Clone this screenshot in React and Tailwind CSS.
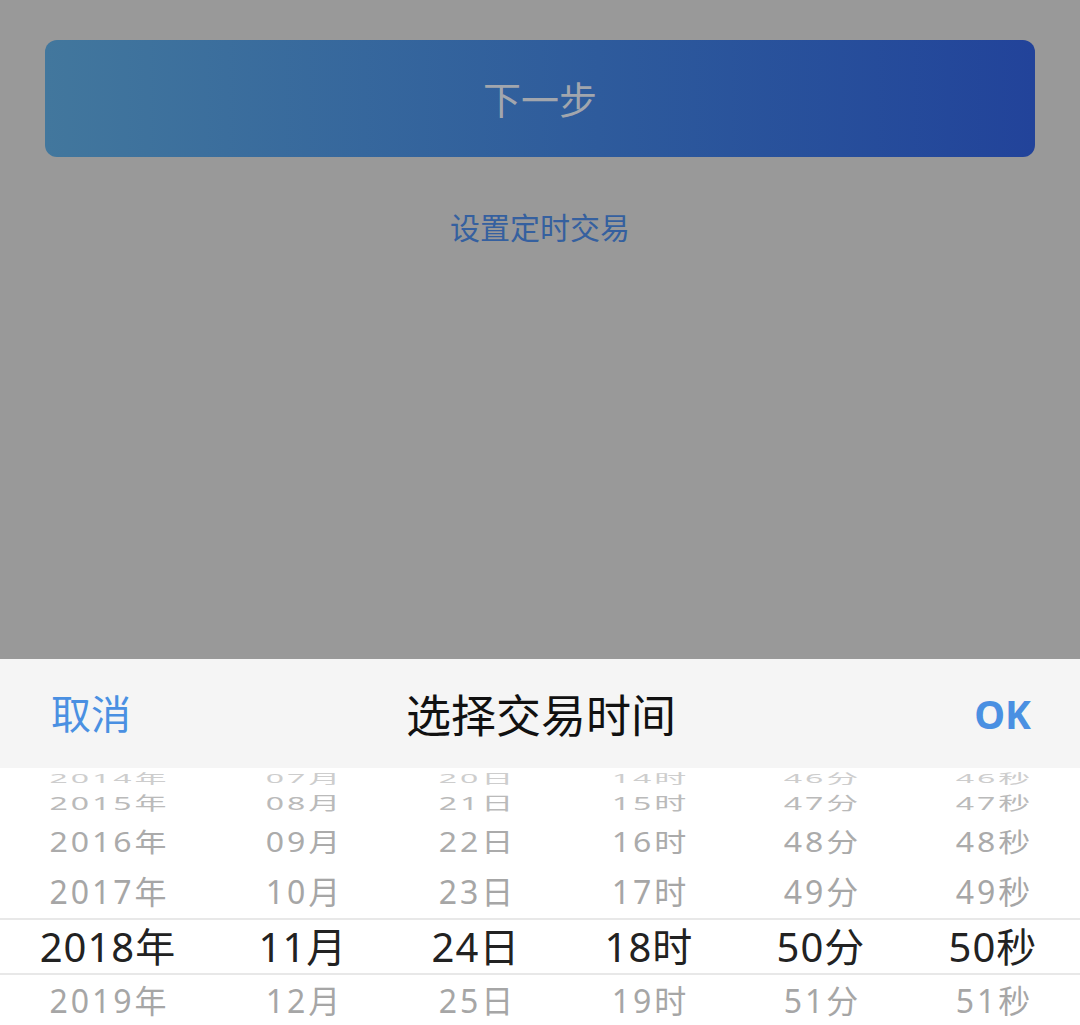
const COL_WIDTHS = ["w-[216px]", "w-[174px]", "w-[172px]", "w-[174px]", "w-[170px]", "w-[174px]"];

const ROWS = [
  { vals: ["2014年", "07月", "20日", "14时", "46分", "46秒"], h: "h-[20px]", color: "text-[#cdcdcd]", scale: "scale-y-[0.4]" },
  { vals: ["2015年", "08月", "21日", "15时", "47分", "47秒"], h: "h-[30px]", color: "text-[#bababa]", scale: "scale-y-[0.57]" },
  { vals: ["2016年", "09月", "22日", "16时", "48分", "48秒"], h: "h-[48px]", color: "text-[#ababab]", scale: "scale-y-[0.83]" },
  { vals: ["2017年", "10月", "23日", "17时", "49分", "49秒"], h: "h-[52px]", color: "text-[#a6a6a6]", scale: "" },
];

const SELECTED = ["2018年", "11月", "24日", "18时", "50分", "50秒"];
const AFTER = ["2019年", "12月", "25日", "19时", "51分", "51秒"];

const font = { fontFamily: '"Noto Sans", "Noto Sans CJK SC", sans-serif' };

function GrayRow({ vals, h, color, scale }) {
  return (
    <div className={`flex shrink-0 ${h} items-center overflow-hidden`}>
      {vals.map((v, i) => (
        <div key={i} className={`${COL_WIDTHS[i]} flex justify-center`}>
          <span className={`text-[32px] leading-none tracking-[3px] pl-[3px] ${color} ${scale} inline-block`}>{v}</span>
        </div>
      ))}
    </div>
  );
}

export default function App() {
  return (
    <div className="w-[1080px] h-[1025px] overflow-hidden flex flex-col bg-white" style={font}>
      <div className="h-[659px] shrink-0 bg-[#999999] flex flex-col items-center pt-[40px] px-[45px]">
        <div className="w-full h-[117px] rounded-[12px] bg-gradient-to-r from-[#42779d] to-[#22439a] flex items-center justify-center">
          <span className="text-[38px] leading-none text-[#a2a6ad]">下一步</span>
        </div>
        <div className="mt-[56px] text-[30px] leading-none text-[#35609f]">设置定时交易</div>
      </div>

      <div className="h-[109px] shrink-0 bg-[#f5f5f5] grid grid-cols-[1fr_auto_1fr] items-center pl-[51px] pr-[49px]">
        <span className="text-[40px] leading-none text-[#4a90e2] justify-self-start">取消</span>
        <span className="text-[45px] leading-none text-[#111111] pt-[4px]">选择交易时间</span>
        <span className="text-[39px] leading-none font-bold text-[#4a90e2] justify-self-end">OK</span>
      </div>

      <div className="flex flex-col shrink-0">
        {ROWS.map((r, i) => (
          <GrayRow key={i} {...r} />
        ))}
        <div className="flex shrink-0 h-[57px] items-center border-y-2 border-[#e8e8e8]">
          {SELECTED.map((v, i) => (
            <div key={i} className={`${COL_WIDTHS[i]} flex justify-center`}>
              <span className="text-[40px] leading-none tracking-[1px] text-[#222222]">{v}</span>
            </div>
          ))}
        </div>
        <GrayRow vals={AFTER} h="h-[52px]" color="text-[#a6a6a6]" scale="" />
      </div>
    </div>
  );
}
